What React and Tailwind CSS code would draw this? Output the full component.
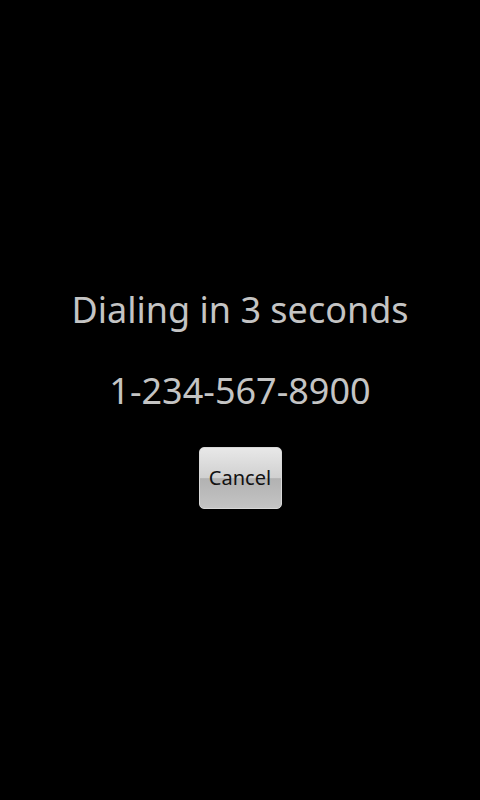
export default function App() {
  return (
    <div className="w-[480px] h-[800px] bg-black flex flex-col items-center pt-[286px] font-['Noto_Sans',sans-serif]">
      {/* countdown */}
      <p className="text-[36px] leading-[48px] text-[#c4c4c4]">Dialing in 3 seconds</p>
      <p className="mt-[33px] text-[36px] leading-[48px] text-[#c4c4c4]">1-234-567-8900</p>

      <button className="mt-[32px] w-[83px] h-[62px] rounded-[5px] border border-[#d8d8d8] bg-[linear-gradient(to_bottom,#e8e8e8_0%,#d0d0d0_50%,#b2b2b2_51%,#c4c4c4_100%)] text-[20px] text-[#111] flex items-center justify-center">
        Cancel
      </button>
    </div>
  );
}
